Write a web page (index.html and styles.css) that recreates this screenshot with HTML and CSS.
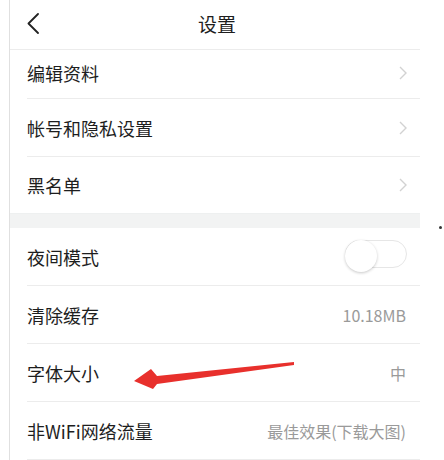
FILE: index.html
```html
<!DOCTYPE html>
<html lang="zh-CN">
<head>
<meta charset="utf-8">
<title>设置</title>
<link rel="stylesheet" href="styles.css">
</head>
<body>
<div class="page">
  <header class="topbar">
    <svg class="back" viewBox="0 0 12 21" width="12" height="21"><path d="M11 1 L1.5 10.5 L11 20" fill="none" stroke="#222" stroke-width="1.8" stroke-linecap="round" stroke-linejoin="round"/></svg>
    <h1 class="title">设置</h1>
  </header>
  <ul class="group">
    <li class="row row-first"><span class="label">编辑资料</span><svg class="chev" viewBox="0 0 8 14" width="8" height="14"><path d="M1 1 L7 7 L1 13" fill="none" stroke="#d2d2d2" stroke-width="1.4"/></svg></li>
    <li class="row"><span class="label">帐号和隐私设置</span><svg class="chev" viewBox="0 0 8 14" width="8" height="14"><path d="M1 1 L7 7 L1 13" fill="none" stroke="#d2d2d2" stroke-width="1.4"/></svg></li>
    <li class="row row-last"><span class="label">黑名单</span><svg class="chev" viewBox="0 0 8 14" width="8" height="14"><path d="M1 1 L7 7 L1 13" fill="none" stroke="#d2d2d2" stroke-width="1.4"/></svg></li>
  </ul>
  <div class="band"></div>
  <ul class="group">
    <li class="row"><span class="label">夜间模式</span><span class="toggle"><span class="knob"></span></span></li>
    <li class="row"><span class="label">清除缓存</span><span class="value">10.18MB</span></li>
    <li class="row"><span class="label">字体大小</span><span class="value">中</span></li>
    <li class="row"><span class="label">非WiFi网络流量</span><span class="value">最佳效果(下载大图)</span></li>
  </ul>
</div>
<span class="dot"></span>
<svg class="arrow" viewBox="0 0 444 460" width="444" height="460"><polygon points="294,362 157,376 151,369 134,381 153,389 157,384 294,365" fill="#e8302c"/></svg>
</body>
</html>
```
FILE: styles.css
```css
html, body {
  margin: 0;
  padding: 0;
  background: #fff;
}
body {
  width: 444px;
  height: 460px;
  overflow: hidden;
  font-family: "Noto Sans CJK SC", "Noto Sans", sans-serif;
  color: #222;
}
.page {
  margin-left: 9px;
  width: 411px;
  height: 460px;
  border-left: 1px solid #e0e0e0;
  box-sizing: border-box;
}
.topbar {
  height: 50px;
  display: flex;
  align-items: center;
  justify-content: center;
  border-bottom: 1px solid #ececec;
  box-sizing: border-box;
  position: relative;
}
.back {
  position: absolute;
  left: 17px;
  top: 13px;
}
.title {
  margin: 0 0 2px 4px;
  font-size: 19px;
  font-weight: normal;
  color: #1e1e1e;
}
.group {
  list-style: none;
  margin: 0;
  padding: 0;
}
.row {
  height: 58px;
  margin-left: 17px;
  padding-right: 14px;
  display: flex;
  align-items: center;
  justify-content: space-between;
  border-bottom: 1px solid #ececec;
  box-sizing: border-box;
}
.row-first {
  height: 49px;
  padding-bottom: 2px;
}
.row-last {
  height: 56px;
  border-bottom: none;
}
.label {
  font-size: 18px;
  color: #1e1e1e;
}
.chev {
  margin-right: -1px;
}
.value {
  font-size: 16px;
  color: #9a9a9a;
}
.band {
  height: 15px;
  background: #f2f3f3;
  border-top: 1px solid #eef0f0;
  box-sizing: border-box;
}
.toggle {
  width: 62px;
  height: 28px;
  border-radius: 14px;
  border: 1px solid #e6e6e6;
  box-sizing: border-box;
  position: relative;
  margin-top: -6px;
  margin-right: -1px;
}
.knob {
  position: absolute;
  left: -1px;
  top: -1px;
  width: 32px;
  height: 32px;
  border-radius: 50%;
  background: #fff;
  box-shadow: 0 1px 3px rgba(0,0,0,0.22);
}
.dot {
  position: absolute;
  left: 439px;
  top: 226px;
  width: 3px;
  height: 3px;
  border-radius: 50%;
  background: #333;
}
.arrow {
  position: absolute;
  left: 0;
  top: 0;
  pointer-events: none;
}
```
